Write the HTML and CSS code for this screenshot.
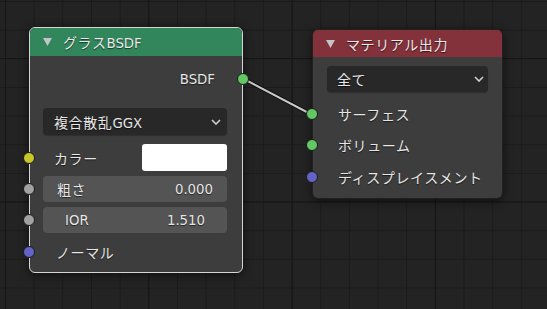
FILE: index.html
```html
<!DOCTYPE html>
<html lang="ja">
<head>
  <meta charset="UTF-8" />
  <meta name="viewport" content="width=device-width, initial-scale=1.0"/>
  <title>Node Editor</title>
  <link rel="stylesheet" href="styles.css">
</head>
<body>
  <div class="canvas">
    <svg class="links" width="547" height="309">
      <line class="link-back" x1="243" y1="78.5" x2="311.5" y2="114.5" />
      <line class="link" x1="243" y1="78.5" x2="311.5" y2="114.5" />
    </svg>

    <!-- Glass BSDF node -->
    <div class="node node-glass active">
      <div class="node-header header-shader">
        <svg class="collapse" width="9" height="8"><polygon points="0,0 9,0 4.5,8" /></svg>
        <span><span class="jp">グラス</span>BSDF</span>
      </div>
      <div class="row row-output">
        <span class="label">BSDF</span>
        <span class="socket socket-out sock-shader"></span>
      </div>
      <div class="row row-select">
        <div class="select">
          <span><span class="jp">複合散乱</span>GGX</span>
          <svg class="chevron" width="10" height="6"><polyline points="1,1 5,5 9,1" /></svg>
        </div>
      </div>
      <div class="row row-color">
        <span class="socket sock-color"></span>
        <span class="label jp">カラー</span>
        <span class="swatch"></span>
      </div>
      <div class="row row-field">
        <span class="socket sock-value"></span>
        <div class="field">
          <span class="jp">粗さ</span>
          <span>0.000</span>
        </div>
      </div>
      <div class="row row-field">
        <span class="socket sock-value"></span>
        <div class="field field-wide">
          <span>IOR</span>
          <span>1.510</span>
        </div>
      </div>
      <div class="row row-input">
        <span class="socket sock-vector"></span>
        <span class="label jp">ノーマル</span>
      </div>
    </div>

    <!-- Material output node -->
    <div class="node node-output">
      <div class="node-header header-output">
        <svg class="collapse" width="9" height="8"><polygon points="0,0 9,0 4.5,8" /></svg>
        <span class="jp">マテリアル出力</span>
      </div>
      <div class="row row-select">
        <div class="select">
          <span class="jp">全て</span>
          <svg class="chevron" width="10" height="6"><polyline points="1,1 5,5 9,1" /></svg>
        </div>
      </div>
      <div class="row row-input">
        <span class="socket sock-shader"></span>
        <span class="label jp">サーフェス</span>
      </div>
      <div class="row row-input">
        <span class="socket sock-shader"></span>
        <span class="label jp">ボリューム</span>
      </div>
      <div class="row row-input">
        <span class="socket sock-vector"></span>
        <span class="label jp">ディスプレイスメント</span>
      </div>
    </div>
  </div>
</body>
</html>
```

FILE: styles.css
```css
:root {
  --bg: #232323;
  --grid: #1b1b1b;
  --grid-major: #151515;
  --node: #3d3d3d;
  --text: #e6e6e6;
  --select: #282828;
  --field: #545454;
}
body {
  margin: 0;
  padding: 0;
  font-family: "DejaVu Sans", "Noto Sans CJK JP", sans-serif;
  font-size: 13.3px;
  color: var(--text);
  overflow: hidden;
}
.canvas {
  position: relative;
  width: 547px;
  height: 309px;
  background:
    linear-gradient(to right, var(--grid-major) 1px, transparent 1px) 5px 0 / 143.33px 100%,
    linear-gradient(to bottom, var(--grid-major) 1px, transparent 1px) 0 58px / 100% 143.33px,
    linear-gradient(to right, var(--grid) 1px, transparent 1px) 5px 0 / 28.667px 100%,
    linear-gradient(to bottom, var(--grid) 1px, transparent 1px) 0 1px / 100% 28.667px,
    var(--bg);
}
.links {
  position: absolute;
  left: 0;
  top: 0;
}
.link-back {
  stroke: rgba(0,0,0,0.55);
  stroke-width: 4;
}
.link {
  stroke: #c9c9c9;
  stroke-width: 2;
}
.jp {
  font-family: "Noto Sans CJK JP", sans-serif;
  font-size: 14px;
  letter-spacing: 0.6px;
}
.node {
  position: absolute;
  display: flex;
  flex-direction: column;
  background: var(--node);
  border: 1px solid rgba(0,0,0,0.45);
  border-radius: 6px;
  box-shadow: 0 2px 10px rgba(0,0,0,0.55);
  text-shadow: 0 1px 1px rgba(0,0,0,0.6);
}
.node.active {
  border-color: #d6d6d6;
}
.node-glass {
  left: 29px;
  top: 27px;
  width: 212px;
  height: 244px;
  padding-bottom: 0;
}
.node-output {
  left: 312px;
  top: 29px;
  width: 189px;
  height: 168px;
}
.node-header {
  display: flex;
  align-items: center;
  height: 28px;
  border-radius: 5px 5px 0 0;
  padding-left: 13px;
  box-sizing: border-box;
  color: #e9e9e9;
}
.node-output .node-header {
  height: 27px;
}
.header-shader {
  background: #31865b;
}
.header-output {
  background: #83313a;
}
.collapse {
  margin-right: 11px;
  fill: #c4c4c4;
}
.row {
  position: relative;
  display: flex;
  align-items: center;
  height: 26px;
  flex-shrink: 0;
}
.socket {
  position: absolute;
  left: -7px;
  top: 50%;
  width: 12px;
  height: 12px;
  margin-top: -6px;
  border-radius: 50%;
  box-sizing: border-box;
  border: 1px solid #1c1c1c;
}
.socket-out {
  left: auto;
  right: -7px;
}
.sock-shader { background: #63c763; }
.sock-color { background: #c7c729; }
.sock-value { background: #a1a1a1; }
.sock-vector { background: #6363c7; }

/* glass node rows */
.node-glass .row-output {
  margin-top: 10px;
  justify-content: flex-end;
  padding-right: 27px;
}
.node-glass .row-select {
  margin-top: 16px;
  height: 27px;
}
.select {
  flex: 1;
  height: 100%;
  display: flex;
  align-items: center;
  justify-content: space-between;
  margin: 0 15px 0 13px;
  padding: 0 6px 0 11px;
  background: var(--select);
  border-radius: 4px;
  box-shadow: 0 1px 1px rgba(0,0,0,0.25);
}
.chevron {
  fill: none;
  stroke: #d0d0d0;
  stroke-width: 1.6;
}
.row-color {
  margin-top: 9px;
  height: 27px;
  padding-left: 24px;
  justify-content: space-between;
}
.swatch {
  width: 85px;
  height: 27px;
  margin-right: 15px;
  background: #ffffff;
  border-radius: 3px;
}
.row-field {
  margin-top: 5px;
}
.field {
  flex: 1;
  height: 100%;
  display: flex;
  align-items: center;
  justify-content: space-between;
  margin: 0 15px 0 13px;
  padding: 0 14px;
  background: var(--field);
  border-radius: 4px;
}
.field-wide {
  padding: 0 22px 0 22px;
}
.node-glass .row-input {
  margin-top: 6px;
  padding-left: 26px;
}

/* output node rows */
.node-output .row-select {
  margin-top: 9px;
}
.node-output .select {
  margin: 0 14px 0 14px;
  padding: 0 4px 0 10px;
}
.node-output .row-input {
  padding-left: 25px;
  margin-top: 5px;
}
.node-output .row-select + .row-input {
  margin-top: 9px;
}
.node-output .row-input:last-child {
  margin-top: 6px;
}
```
